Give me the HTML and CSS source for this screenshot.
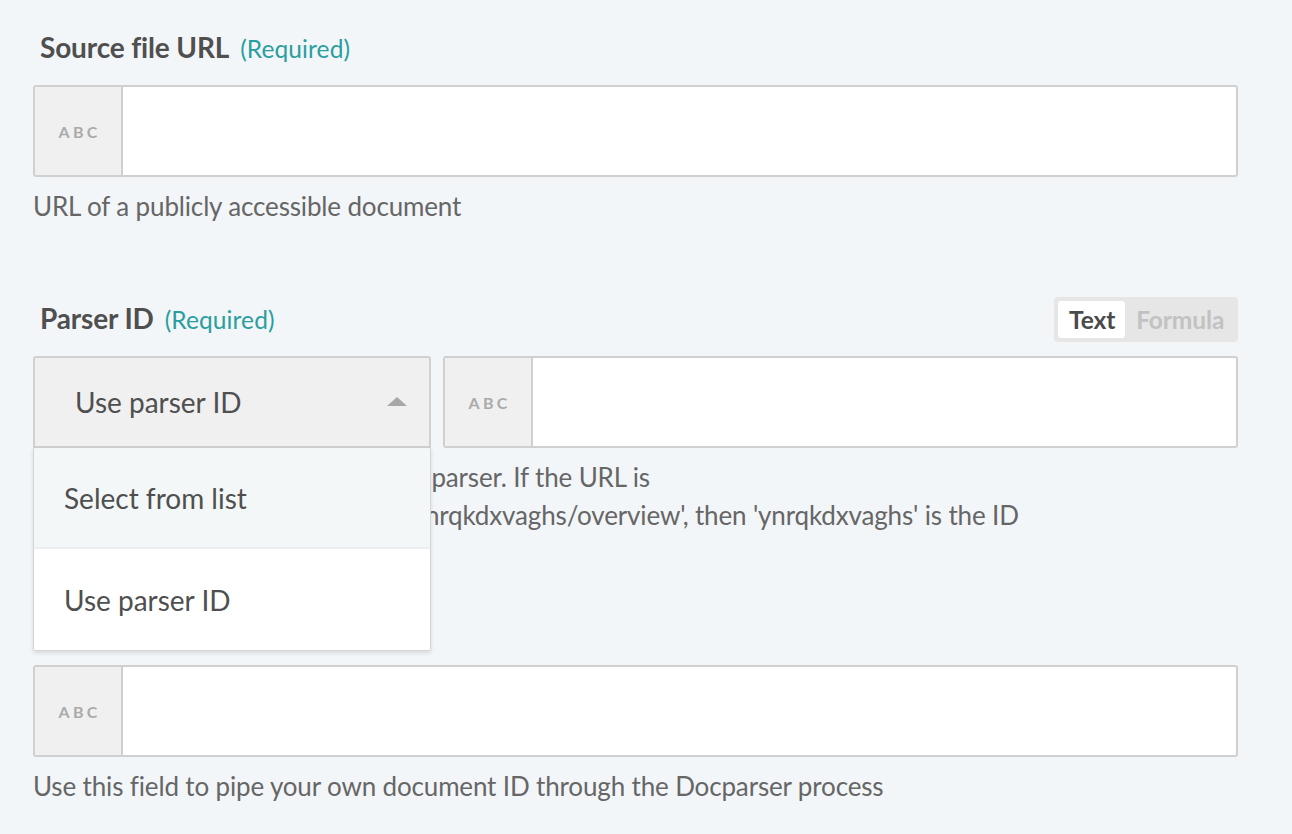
FILE: index.html
```html
<!DOCTYPE html>
<html>
<head>
<meta charset="utf-8">
<link rel="stylesheet" href="styles.css">
</head>
<body>
<div class="form">
  <div class="field">
    <div class="label-row">
      <div class="label"><span class="name">Source file URL</span><span class="req">(Required)</span></div>
    </div>
    <div class="input">
      <div class="abc">ABC</div>
      <div class="box"></div>
    </div>
    <div class="help">URL of a publicly accessible document</div>
  </div>

  <div class="field">
    <div class="label-row">
      <div class="label"><span class="name">Parser ID</span><span class="req">(Required)</span></div>
      <div class="toggle"><span class="opt active">Text</span><span class="opt">Formula</span></div>
    </div>
    <div class="row">
      <div class="select-wrap">
        <div class="select">
          <span>Use parser ID</span>
          <span class="caret"></span>
        </div>
        <div class="menu">
          <div class="item hover">Select from list</div>
          <div class="item">Use parser ID</div>
        </div>
      </div>
      <div class="input grow">
        <div class="abc">ABC</div>
        <div class="box"></div>
      </div>
    </div>
    <div class="help">Enter the unique ID of a Docparser parser. If the URL is<br>'https://app.docparser.com/stack/ynrqkdxvaghs/overview', then 'ynrqkdxvaghs' is the ID</div>
  </div>

  <div class="field">
    <div class="label-row">
      <div class="label"><span class="name">Remote ID</span></div>
    </div>
    <div class="input">
      <div class="abc">ABC</div>
      <div class="box"></div>
    </div>
    <div class="help">Use this field to pipe your own document ID through the Docparser process</div>
  </div>
</div>
</body>
</html>
```

FILE: styles.css
```css
* { box-sizing: border-box; }
html, body { margin: 0; padding: 0; }
body {
  background: #f3f6f9;
  font-family: Lato, "Open Sans", sans-serif;
  color: #555;
  width: 1292px;
  height: 834px;
  overflow: hidden;
}
.form {
  padding: 26px 0 0 33px;
  width: 1238px;
  display: flex;
  flex-direction: column;
  gap: 72px;
}
.field { display: flex; flex-direction: column; }
.label-row {
  height: 45px;
  display: flex;
  align-items: center;
  justify-content: space-between;
  margin-bottom: 14px;
}
.label { padding-left: 7px; display: flex; align-items: baseline; gap: 11px; margin-top: -4px; }
.name { font-size: 28px; font-weight: 700; color: #4f4f4f; letter-spacing: -0.15px; }
.req { font-size: 24.5px; color: #2b9ea0; letter-spacing: 0.1px; }
.toggle {
  background: #e6e6e6;
  border-radius: 4px;
  padding: 4px;
  display: flex;
  height: 45px;
  width: 184px;
}
.opt {
  font-size: 24.5px;
  font-weight: 700;
  color: #c2c2c2;
  padding: 0 10px 0 11px;
  display: flex;
  align-items: center;
  border-radius: 3px;
  letter-spacing: -0.1px;
}
.opt.active { background: #fff; color: #4a4a4a; }
.input {
  height: 92px;
  display: flex;
  border: 2px solid #d0d0d0;
  border-radius: 3px;
  background: #fff;
  overflow: hidden;
}
.abc {
  width: 88px;
  flex: none;
  background: #f0f0f0;
  border-right: 2px solid #d0d0d0;
  display: flex;
  align-items: center;
  justify-content: center;
  font-size: 16px;
  font-weight: 700;
  letter-spacing: 3.2px;
  color: #aaa;
  padding-left: 3px;
}
.box { flex: 1; }
.help {
  margin-top: 10px;
  font-size: 26px;
  line-height: 38px;
  color: #666;
  letter-spacing: -0.15px;
}
.row { display: flex; gap: 12px; }
.grow { flex: 1; }
.select-wrap { position: relative; width: 398px; flex: none; }
.select {
  height: 92px;
  background: #f0f0f0;
  border: 2px solid #d0d0d0;
  border-radius: 3px 3px 0 0;
  display: flex;
  align-items: center;
  justify-content: space-between;
  padding: 0 22px 0 40px;
  font-size: 28px;
  color: #4f4f4f;
  letter-spacing: 0;
}
.caret {
  width: 0; height: 0;
  border-left: 10px solid transparent;
  border-right: 10px solid transparent;
  border-bottom: 9px solid #a8a8a8;
  margin-top: -2px;
}
.menu {
  position: absolute;
  left: 0; top: 92px;
  width: 398px;
  background: #fff;
  border: 1px solid #d6d6d6;
  border-top: none;
  border-radius: 0 0 3px 3px;
  box-shadow: 0 2px 4px rgba(0,0,0,0.12);
  z-index: 5;
}
.item {
  height: 101px;
  display: flex;
  align-items: center;
  padding-left: 30px;
  font-size: 28px;
  color: #4f4f4f;
  background: #fff;
  letter-spacing: 0;
}
.item.hover { background: #f3f7f8; border-bottom: 2px solid #eceff1; }
```
